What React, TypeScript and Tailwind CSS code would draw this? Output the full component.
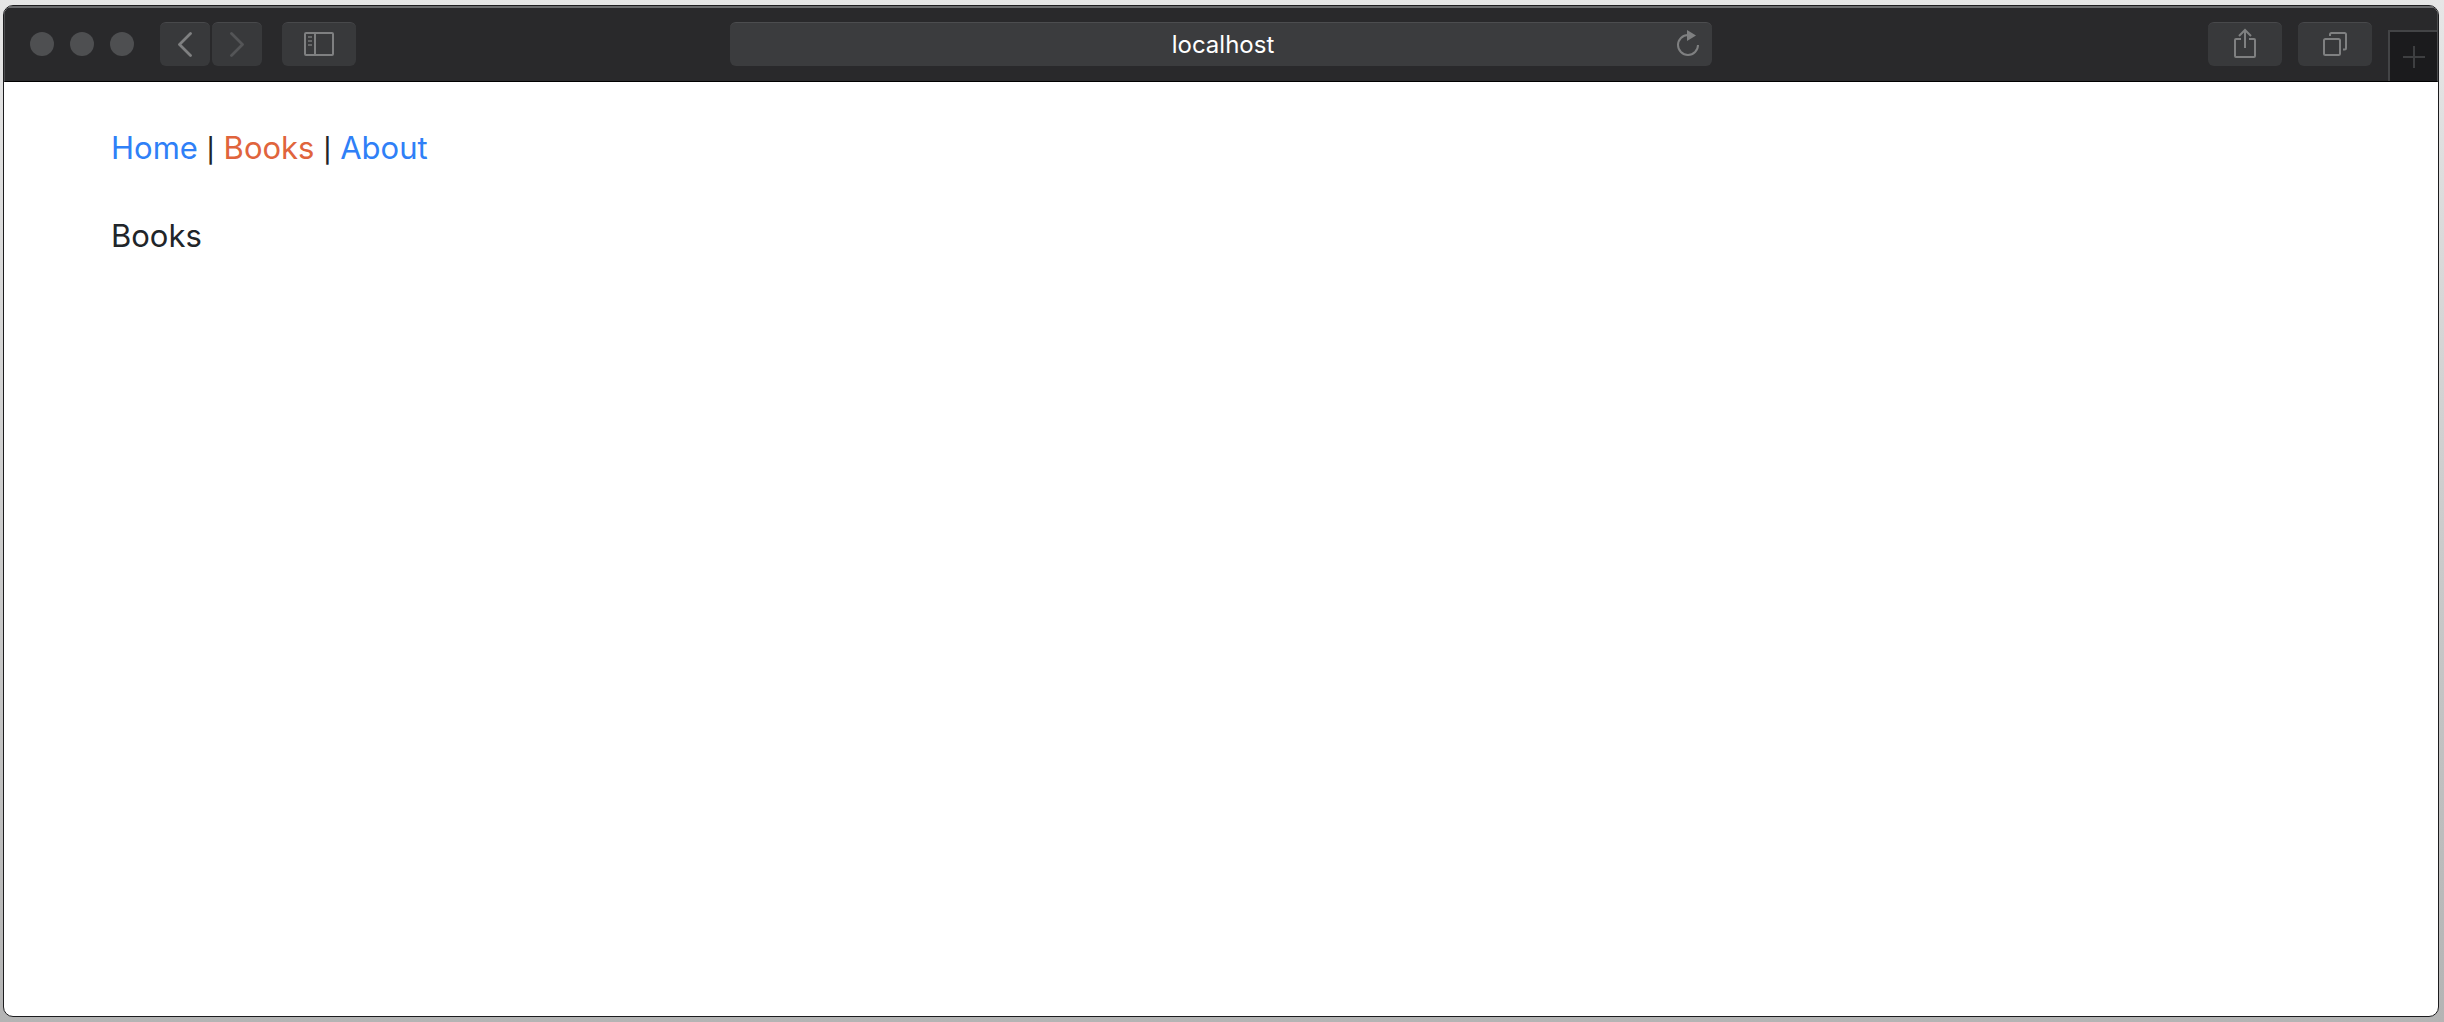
import type { ReactNode } from "react";

const toolButton =
  "flex h-11 items-center justify-center bg-[#38393b] rounded-md border-t border-[#48494b] text-[#7f8081]";

function ToolButton({ label, width, children }: { label: string; width: string; children: ReactNode }) {
  return (
    <button type="button" aria-label={label} className={`${toolButton} ${width}`}>
      {children}
    </button>
  );
}

function Separator() {
  return <span className="text-2xl font-medium">|</span>;
}

function Toolbar() {
  return (
    <header className="grid grid-cols-[1fr_minmax(0,982px)_1fr] border-x border-t-2 border-b border-x-[#4c4d4f] border-t-[#6a6b6d] border-b-black bg-[#29292b]">
      <div className="flex items-center pt-3.5 pb-[15px] pl-[25px]">
        <div className="flex gap-4">
          <span className="size-6 rounded-full bg-[#4e4f51]" />
          <span className="size-6 rounded-full bg-[#4e4f51]" />
          <span className="size-6 rounded-full bg-[#4e4f51]" />
        </div>
        <div className="ml-[26px] flex gap-0.5">
          <ToolButton label="Back" width="w-[50px]">
            <svg width="16" height="25" viewBox="0 0 16 25" fill="none" stroke="currentColor" strokeWidth="2.8" strokeLinecap="round" strokeLinejoin="round">
              <path d="M13.500 1.500 2.500 12.500l11 11" />
            </svg>
          </ToolButton>
          <ToolButton label="Forward" width="w-[50px]">
            <svg className="text-[#545557]" width="16" height="25" viewBox="0 0 16 25" fill="none" stroke="currentColor" strokeWidth="2.8" strokeLinecap="round" strokeLinejoin="round">
              <path d="m2.500 1.500 11 11-11 11" />
            </svg>
          </ToolButton>
        </div>
        <div className="ml-5">
          <ToolButton label="Show sidebar" width="w-[74px]">
            <svg width="30" height="25" viewBox="0 0 30 25" fill="none" stroke="currentColor" strokeWidth="2">
              <rect x="1" y="1" width="28" height="22" rx="1" />
              <path d="M11 1v22" />
              <path d="M4 5h4M4 9h4M4 13h4" opacity=".65" />
            </svg>
          </ToolButton>
        </div>
      </div>

      <div className="flex items-start pt-3.5">
        <div className="flex h-11 w-full items-center rounded-md border-t border-[#4c4d4f] bg-[#3b3c3e] pr-2 pl-11">
          <input
            type="text"
            aria-label="Address"
            defaultValue="localhost"
            className="min-w-0 flex-1 bg-transparent text-center text-2xl text-white outline-none"
          />
          <button type="button" aria-label="Reload" className="flex size-8 items-center justify-center text-[#7f8081]">
            <svg width="24" height="29" viewBox="0 0 24 29" fill="none">
              <path d="M22 15a10 10 0 1 1-10-10" stroke="currentColor" strokeWidth="2" />
              <path d="M11 0v11l9-5.500z" fill="currentColor" />
            </svg>
          </button>
        </div>
      </div>

      <div className="flex items-start justify-end gap-4 pt-3.5">
        <ToolButton label="Share" width="w-[74px]">
          <svg width="22" height="33" viewBox="0 0 22 33" fill="none" stroke="currentColor" strokeWidth="2">
            <path d="M7 11H2a1 1 0 0 0-1 1v16a1 1 0 0 0 1 1h18a1 1 0 0 0 1-1V12a1 1 0 0 0-1-1h-5M11 20V2M5 8l6-6 6 6" />
          </svg>
        </ToolButton>
        <ToolButton label="Show all tabs" width="w-[74px]">
          <svg width="24" height="25" viewBox="0 0 24 25" fill="none" stroke="currentColor" strokeWidth="2">
            <rect x="1" y="7" width="16" height="16" rx="1.5" />
            <path d="M7 4V2.500a1.500 1.500 0 0 1 1.500-1.500h13a1.500 1.500 0 0 1 1.500 1.500V16a1.500 1.500 0 0 1-1.500 1.500H20" />
          </svg>
        </ToolButton>
        <button
          type="button"
          aria-label="New tab"
          className="flex h-[51px] w-[49px] items-center justify-center self-end border-t-2 border-l-2 border-[#434446] bg-[#1b1b1d] text-[#3e3f41]"
        >
          <svg width="22" height="22" viewBox="0 0 22 22" fill="none" stroke="currentColor" strokeWidth="2">
            <path d="M11 0v22M0 11h22" />
          </svg>
        </button>
      </div>
    </header>
  );
}

export default function App() {
  return (
    <div className="flex min-h-screen bg-linear-to-b from-[#e6e6e6] to-[#b4b4b4] pt-[5px] pr-[5px] pb-[5px] pl-[3px] font-['Inter',sans-serif]">
      <div className="flex flex-1 flex-col overflow-hidden rounded-[10px] border border-[#1c1c1e] bg-white">
        <Toolbar />
        <main className="px-[107px] py-[42px] text-[31px] leading-[48px] text-[#212529]">
          <nav aria-label="Main">
            <a href="#home" className="text-[#2f80f7]">Home</a> <Separator />{" "}
            <a href="#books" aria-current="page" className="text-[#e0643c]">Books</a> <Separator />{" "}
            <a href="#about" className="text-[#2f80f7]">About</a>
          </nav>
          <p className="mt-10">Books</p>
        </main>
      </div>
    </div>
  );
}
